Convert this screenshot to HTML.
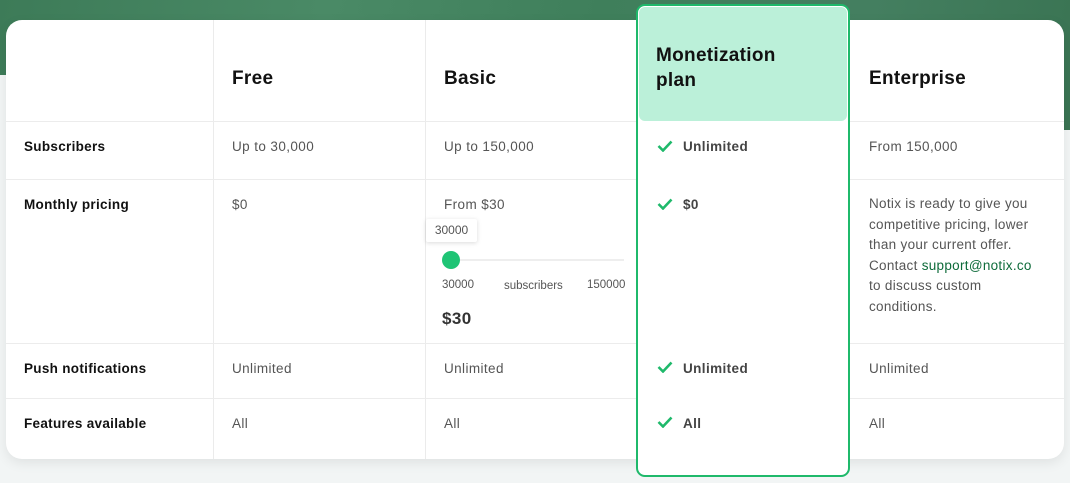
<!DOCTYPE html>
<html><head><meta charset="utf-8"><style>
*{margin:0;padding:0;box-sizing:border-box}
body{width:1070px;height:483px;overflow:hidden;background:#f2f5f5;font-family:"Liberation Sans",sans-serif;position:relative}
.bg{position:absolute;left:0;top:0;width:1070px;height:130px;background:linear-gradient(100deg,#3d7b58 0%,#4a8a66 30%,#3f7f5b 55%,#447f60 80%,#3a7453 100%)}
.bgl{position:absolute;left:0;top:75px;width:1064px;height:60px;background:#f2f5f5}
.card{position:absolute;left:6px;top:20px;width:1058px;height:439px;background:#fff;border-radius:16px;box-shadow:0 4px 12px rgba(0,0,0,.08)}
.v{position:absolute;width:1px;background:#ebebeb;top:20px;height:439px}
.h{position:absolute;left:6px;width:1058px;height:1px;background:#ececec}
.t{position:absolute;font-size:13.5px;color:#555;white-space:nowrap;letter-spacing:0.4px}
.b{font-weight:bold;color:#111;letter-spacing:0.3px}
.hd{position:absolute;font-size:19px;font-weight:bold;color:#111;letter-spacing:0.3px}
.hl{position:absolute;left:636px;top:4px;width:214px;height:473px;border:2px solid #1fb96b;border-radius:9px;background:#fff}
.hlh{position:absolute;left:639px;top:7px;width:208px;height:114px;background:#bbf0d9;border-radius:6px}
.ck{position:absolute;width:16px;height:12px}
.m{font-weight:bold;color:#444}
</style></head><body>
<div class="bg"></div><div class="bgl"></div>
<div class="card"></div>
<div class="v" style="left:213px"></div>
<div class="v" style="left:425px"></div>
<div class="h" style="top:121px"></div>
<div class="h" style="top:179px"></div>
<div class="h" style="top:343px"></div>
<div class="h" style="top:398px"></div>
<div class="hl"></div><div class="hlh"></div>
<div class="hd" style="left:232px;top:68px">Free</div>
<div class="hd" style="left:444px;top:68px">Basic</div>
<div class="hd" style="left:656px;top:43px;line-height:25px">Monetization<br>plan</div>
<div class="hd" style="left:869px;top:68px">Enterprise</div>

<div class="t b" style="left:24px;top:139px">Subscribers</div>
<div class="t b" style="left:24px;top:197px">Monthly pricing</div>
<div class="t b" style="left:24px;top:361px">Push notifications</div>
<div class="t b" style="left:24px;top:416px">Features available</div>

<div class="t" style="left:232px;top:139px">Up to 30,000</div>
<div class="t" style="left:232px;top:197px">$0</div>
<div class="t" style="left:232px;top:361px">Unlimited</div>
<div class="t" style="left:232px;top:416px">All</div>

<div class="t" style="left:444px;top:139px">Up to 150,000</div>
<div class="t" style="left:444px;top:197px">From $30</div>
<div style="position:absolute;left:426px;top:219px;width:51px;height:23px;background:#fff;box-shadow:0 1px 5px rgba(0,0,0,.15);border-radius:2px;font-size:12px;color:#555;text-align:center;line-height:23px">30000</div>
<div style="position:absolute;left:450px;top:259px;width:174px;height:2px;background:#eee"></div>
<div style="position:absolute;left:442px;top:251px;width:18px;height:18px;border-radius:50%;background:#1fc475"></div>
<div class="t" style="left:442px;top:279px;font-size:11.5px;letter-spacing:0">30000</div>
<div class="t" style="left:504px;top:280px;font-size:11.5px;letter-spacing:0">subscribers</div>
<div class="t" style="left:587px;top:279px;font-size:11.5px;letter-spacing:0">150000</div>
<div class="t" style="left:442px;top:309px;font-size:17px;font-weight:bold;color:#333">$30</div>
<div class="t" style="left:444px;top:361px">Unlimited</div>
<div class="t" style="left:444px;top:416px">All</div>

<svg class="ck" style="left:657px;top:140px" viewBox="0 0 16 12"><path d="M1.5 6 L6 10.5 L14.5 1.5" fill="none" stroke="#1fb96b" stroke-width="2.6"/></svg>
<div class="t m" style="left:683px;top:139px">Unlimited</div>
<svg class="ck" style="left:657px;top:198px" viewBox="0 0 16 12"><path d="M1.5 6 L6 10.5 L14.5 1.5" fill="none" stroke="#1fb96b" stroke-width="2.6"/></svg>
<div class="t m" style="left:683px;top:197px">$0</div>
<svg class="ck" style="left:657px;top:361px" viewBox="0 0 16 12"><path d="M1.5 6 L6 10.5 L14.5 1.5" fill="none" stroke="#1fb96b" stroke-width="2.6"/></svg>
<div class="t m" style="left:683px;top:361px">Unlimited</div>
<svg class="ck" style="left:657px;top:416px" viewBox="0 0 16 12"><path d="M1.5 6 L6 10.5 L14.5 1.5" fill="none" stroke="#1fb96b" stroke-width="2.6"/></svg>
<div class="t m" style="left:683px;top:416px">All</div>

<div class="t" style="left:869px;top:139px">From 150,000</div>
<div class="t" style="left:869px;top:194px;line-height:20.5px;letter-spacing:0.3px">Notix is ready to give you<br>competitive pricing, lower<br>than your current offer.<br>Contact <span style="color:#0e6b3a">support@notix.co</span><br>to discuss custom<br>conditions.</div>
<div class="t" style="left:869px;top:361px">Unlimited</div>
<div class="t" style="left:869px;top:416px">All</div>
</body></html>
